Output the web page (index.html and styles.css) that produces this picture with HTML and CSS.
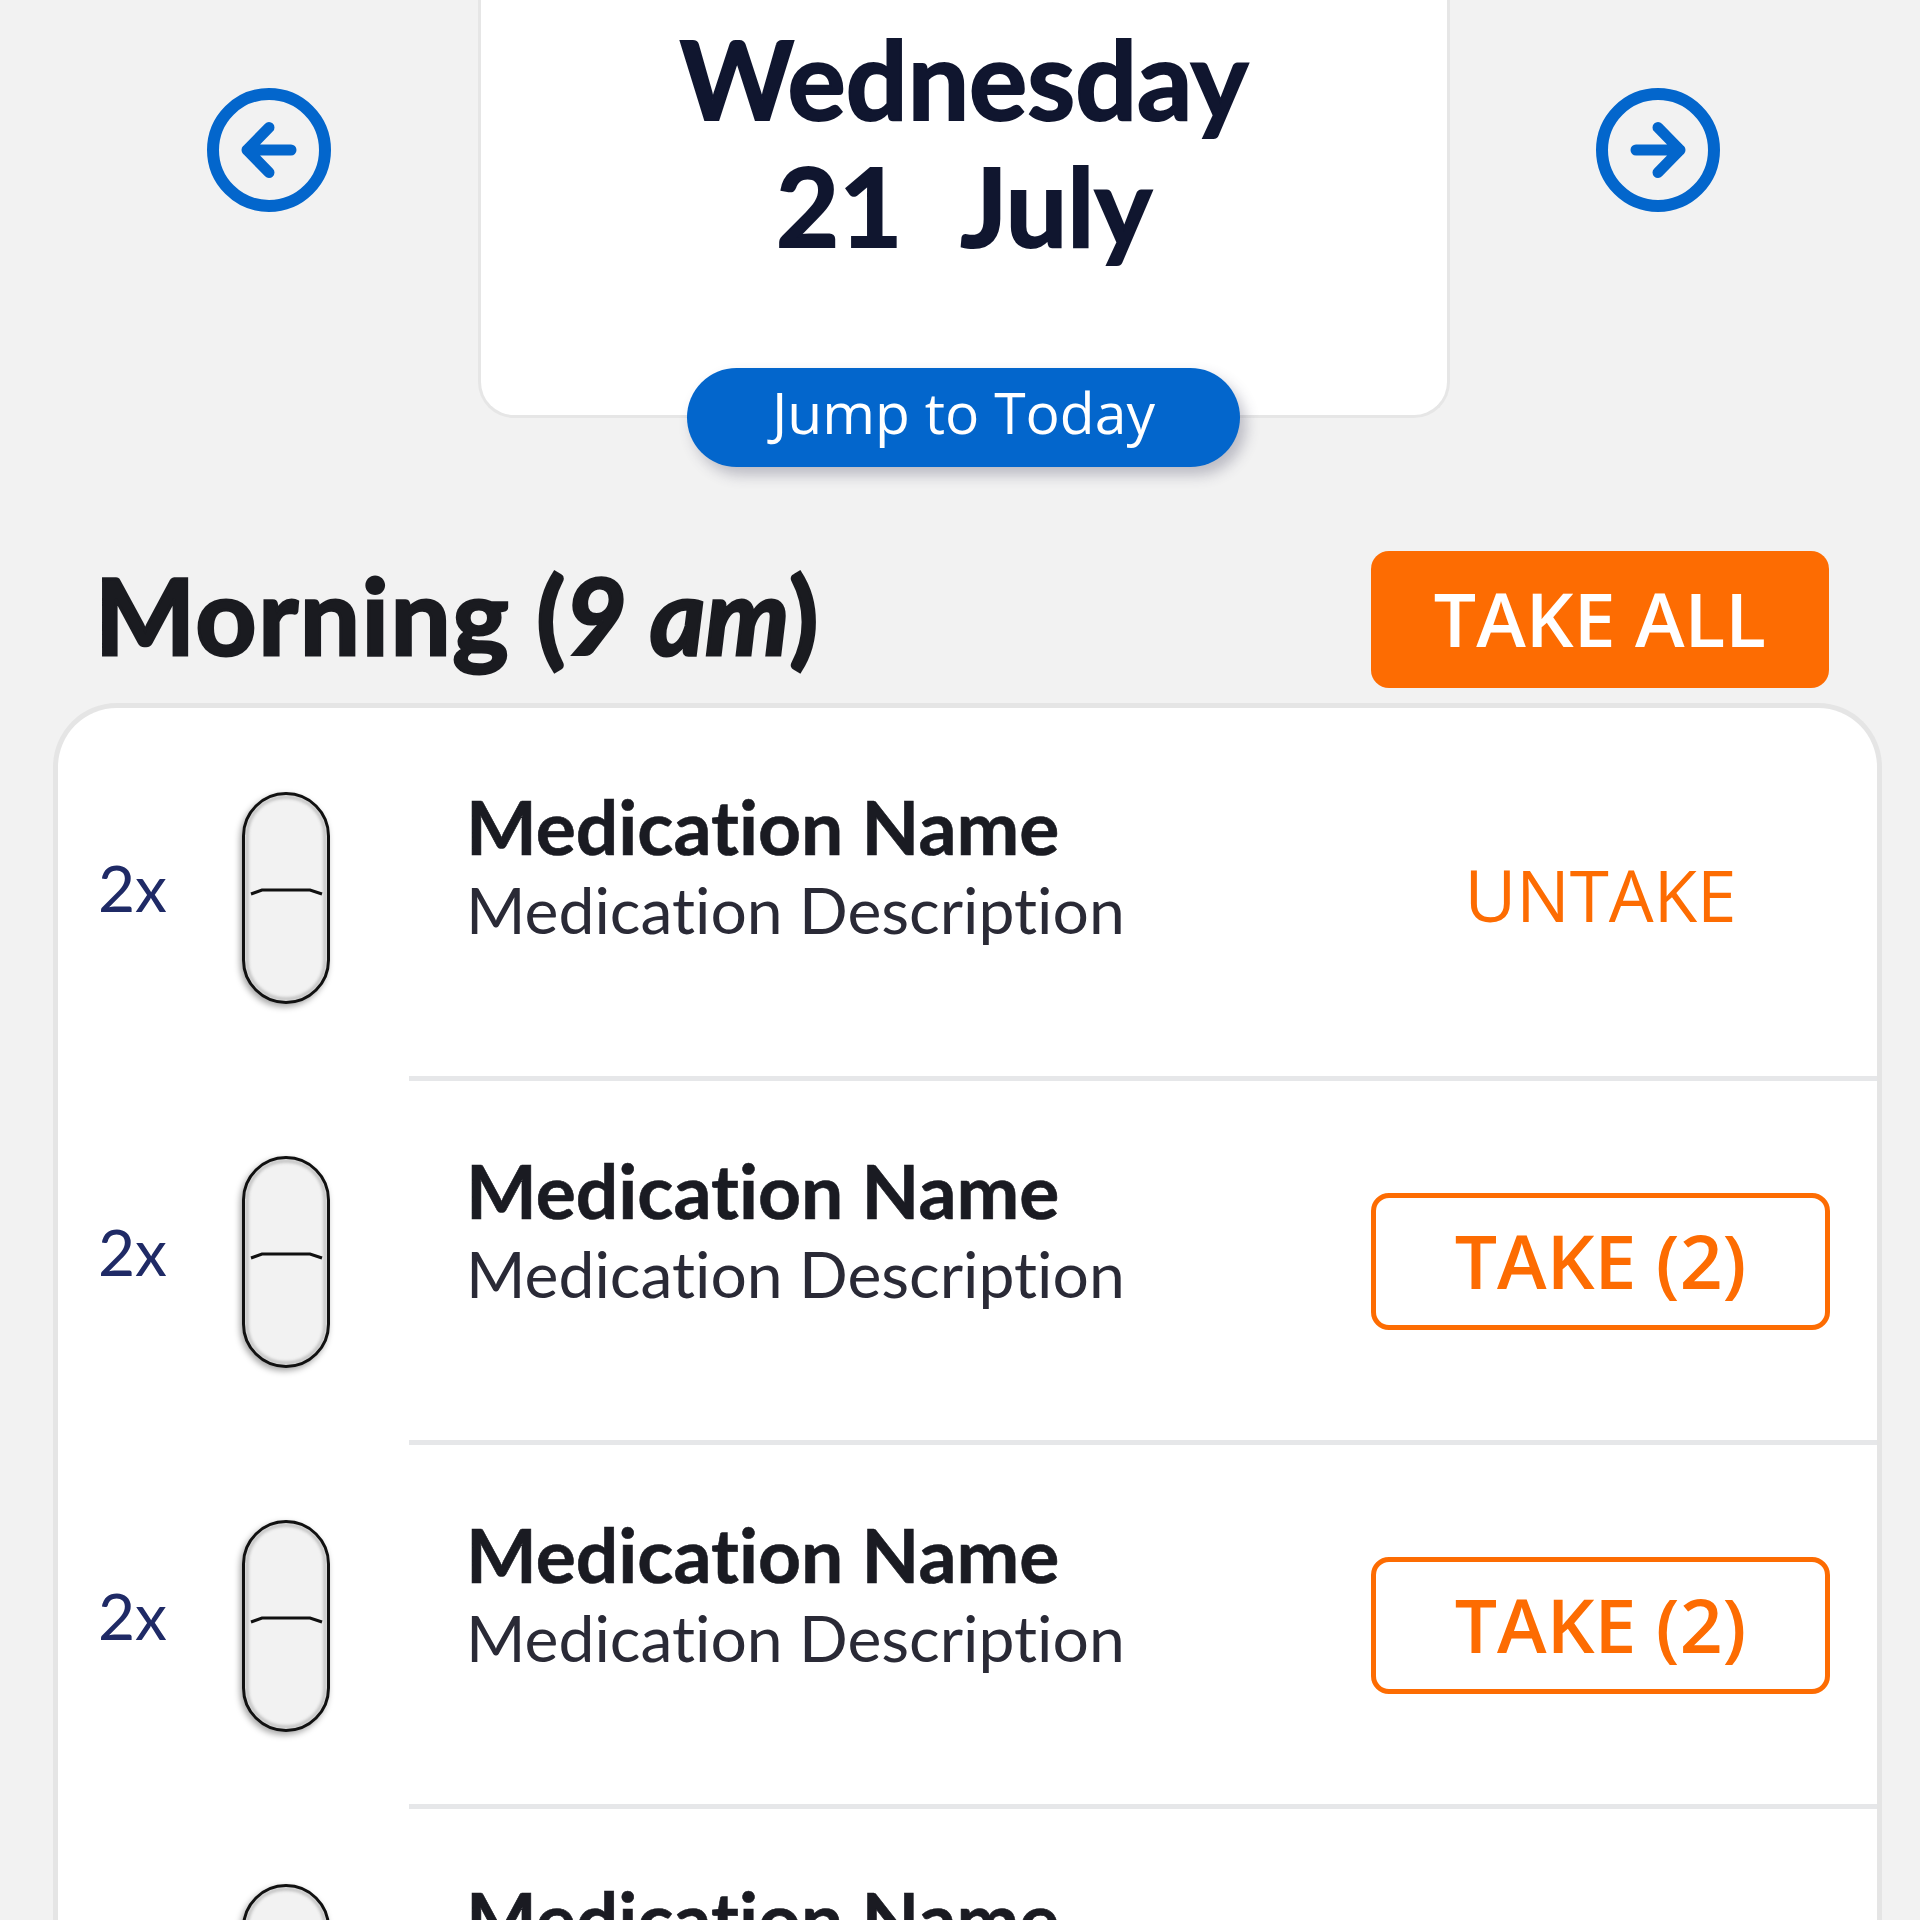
FILE: index.html
```html
<!DOCTYPE html>
<html lang="en">
<head>
<meta charset="utf-8">
<title>Medication schedule</title>
<link rel="stylesheet" href="styles.css">
</head>
<body>
<div class="page">
  <header class="date-bar">
    <svg class="nav-icon" viewBox="0 0 124 124" aria-hidden="true"><circle cx="62" cy="62" r="56"/><path d="M62 39.5 L40 62 L62 84.5 M40 62 H84"/></svg>
    <div class="date-card">
      <div class="date-text">Wednesday<br><span class="date-day">21</span>July</div>
      <button class="jump">Jump to Today</button>
    </div>
    <svg class="nav-icon" viewBox="0 0 124 124" aria-hidden="true"><circle cx="62" cy="62" r="56"/><path d="M62 39.5 L84 62 L62 84.5 M84 62 H40"/></svg>
  </header>

  <section class="section-head">
    <h2 class="section-title"><span class="word">Morning</span> (<em>9 am</em>)</h2>
    <button class="btn btn-solid">TAKE ALL</button>
  </section>

  <section class="med-card">
    <article class="med-row">
      <span class="qty">2x</span>
      <svg class="pill" viewBox="0 0 88 213" aria-hidden="true"><rect class="pill-body" x="1.5" y="1.5" width="85" height="209" rx="42.5"/><rect class="pill-shade" x="5" y="5" width="78" height="202" rx="38"/><rect class="pill-edge" x="1.5" y="1.5" width="85" height="209" rx="42.5"/><path d="M9 102 L20 98 H68 L80 102"/></svg>
      <div class="med-info"><div class="med-name">Medication Name</div><div class="med-desc">Medication Description</div></div>
      <div class="action"><span class="untake">UNTAKE</span></div>
    </article>
    <article class="med-row">
      <span class="qty">2x</span>
      <svg class="pill" viewBox="0 0 88 213" aria-hidden="true"><rect class="pill-body" x="1.5" y="1.5" width="85" height="209" rx="42.5"/><rect class="pill-shade" x="5" y="5" width="78" height="202" rx="38"/><rect class="pill-edge" x="1.5" y="1.5" width="85" height="209" rx="42.5"/><path d="M9 102 L20 98 H68 L80 102"/></svg>
      <div class="med-info"><div class="med-name">Medication Name</div><div class="med-desc">Medication Description</div></div>
      <div class="action"><button class="btn btn-outline">TAKE (2)</button></div>
    </article>
    <article class="med-row">
      <span class="qty">2x</span>
      <svg class="pill" viewBox="0 0 88 213" aria-hidden="true"><rect class="pill-body" x="1.5" y="1.5" width="85" height="209" rx="42.5"/><rect class="pill-shade" x="5" y="5" width="78" height="202" rx="38"/><rect class="pill-edge" x="1.5" y="1.5" width="85" height="209" rx="42.5"/><path d="M9 102 L20 98 H68 L80 102"/></svg>
      <div class="med-info"><div class="med-name">Medication Name</div><div class="med-desc">Medication Description</div></div>
      <div class="action"><button class="btn btn-outline">TAKE (2)</button></div>
    </article>
    <article class="med-row">
      <span class="qty">2x</span>
      <svg class="pill" viewBox="0 0 88 213" aria-hidden="true"><rect class="pill-body" x="1.5" y="1.5" width="85" height="209" rx="42.5"/><rect class="pill-shade" x="5" y="5" width="78" height="202" rx="38"/><rect class="pill-edge" x="1.5" y="1.5" width="85" height="209" rx="42.5"/><path d="M9 102 L20 98 H68 L80 102"/></svg>
      <div class="med-info"><div class="med-name">Medication Name</div><div class="med-desc">Medication Description</div></div>
      <div class="action"><button class="btn btn-outline">TAKE (2)</button></div>
    </article>
  </section>
</div>
</body>
</html>
```
FILE: styles.css
```css
* { box-sizing: border-box; }
html, body { margin: 0; height: 100%; }
body { background: #f2f2f2; overflow: hidden; }
.page { width: 1920px; height: 1920px; overflow: hidden; font-family: Lato, sans-serif; color: #161b33; font-variant-ligatures: none; }

.date-bar { display: flex; align-items: flex-start; height: 467px; padding-left: 207px; }
.nav-icon { width: 124px; height: 124px; margin-top: 88px; flex: none; fill: none; stroke: #0366cc; }
.nav-icon circle { stroke-width: 12; }
.nav-icon path { stroke-width: 11; stroke-linecap: round; stroke-linejoin: round; }
.date-card { position: relative; flex: none; width: 972px; height: 418px; margin: 0 146px 0 147px; background: #fff; border: 3px solid #e6e6e6; border-top: 0; border-radius: 0 0 36px 36px; text-align: center; }
.date-text { font-weight: 700; font-size: 109px; line-height: 127px; padding-top: 14px; color: #10162f; -webkit-text-stroke: 2px #10162f; }
.date-day { margin-right: 58px; }
.jump { position: absolute; left: 206px; top: 368px; width: 553px; height: 99px; border: 0; border-radius: 50px; background: #0366cc; color: #fff; font-family: "Open Sans", sans-serif; font-weight: 400; font-size: 57px; box-shadow: 6px 8px 14px rgba(60, 60, 90, .3); padding: 0 0 12px; }

.section-head { display: flex; justify-content: space-between; align-items: flex-start; height: 236px; padding: 84px 91px 0 95px; }
.section-title { margin: -2px 0 0; font-weight: 700; font-size: 106px; line-height: 130px; color: #1a1b20; -webkit-text-stroke: 3px #1a1b20; }
.word { letter-spacing: 2px; }

.btn { width: 458px; height: 137px; border-radius: 18px; font-family: "Open Sans", sans-serif; font-weight: 600; font-size: 75px; padding: 0 0 3px; }
.btn-solid { background: #fd6c02; border: 0; color: #fff; }
.btn-outline { background: #fff; border: 5px solid #fd6c02; color: #fd6c02; }

.med-card { margin: 0 38px 0 53px; padding-top: 9px; height: 1300px; background: #fff; border: 5px solid #e5e5e5; border-bottom: 0; border-radius: 64px 64px 0 0; }
.med-row { display: flex; align-items: flex-start; height: 364px; padding-left: 40px; position: relative; }
.med-row::after { content: ""; position: absolute; left: 351px; right: 0; bottom: 0; height: 5px; background: #e6e7e9; }
.qty { width: 144px; margin-top: 134px; font-size: 64px; line-height: 74px; color: #1f2a66; flex: none; }
.pill { width: 88px; height: 213px; margin-top: 75px; flex: none; filter: drop-shadow(-2px 3px 3px rgba(0, 0, 0, .35)); }
.pill-body { fill: #f2f2f2; }
.pill-shade { fill: none; stroke: #bbb; stroke-width: 3; filter: blur(1.5px); }
.pill-edge { fill: none; stroke: #111; stroke-width: 3; }
.pill path { fill: none; stroke: #111; stroke-width: 3; }
.med-info { width: 903px; margin-left: 136px; padding-top: 65px; flex: none; }
.med-name { font-weight: 700; font-size: 75px; line-height: 88px; color: #1a1b22; -webkit-text-stroke: .6px #1a1b22; }
.med-desc { font-size: 64.2px; line-height: 78px; color: #2a2a36; margin-top: 1px; }
.action { width: 459px; height: 137px; margin-top: 112px; margin-left: 2px; display: flex; align-items: center; justify-content: center; flex: none; }
.untake { font-family: "Open Sans", sans-serif; font-size: 71px; color: #fd6c02; margin-bottom: 6px; }
.action .btn { width: 459px; }
```
